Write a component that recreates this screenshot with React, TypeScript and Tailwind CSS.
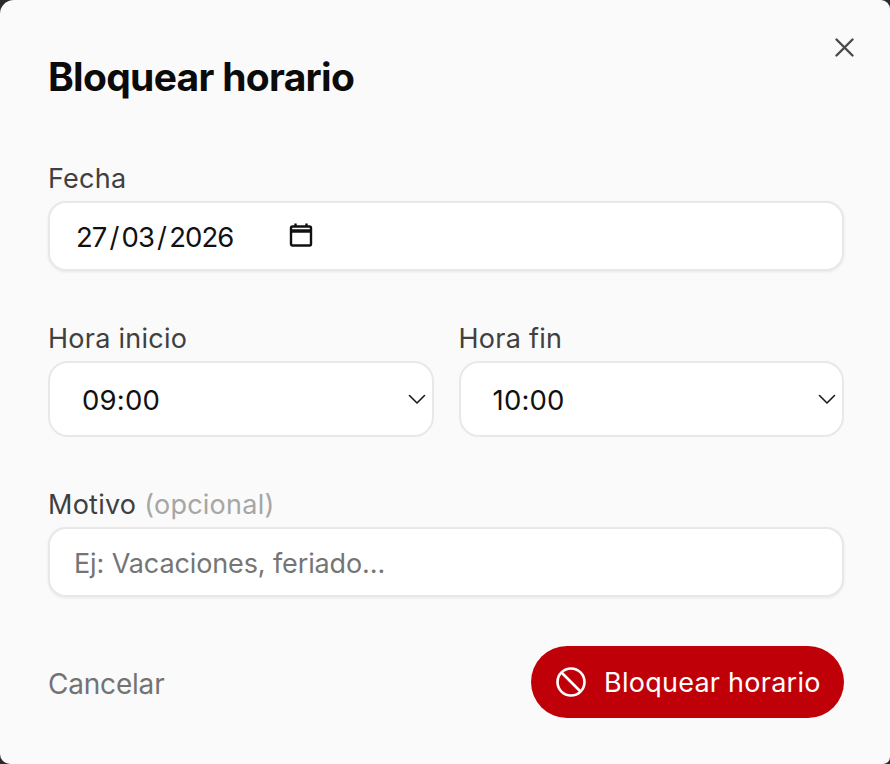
import React from "react";

const font = { fontFamily: "Inter, sans-serif" };
const labelCls = "text-[27px] leading-[34px] tracking-[0.25px] font-[420] text-[#404040] mb-[5px]";

function Chevron() {
  return (
    <svg width="18" height="18" viewBox="0 0 18 18" fill="none" stroke="#1a1a1a" strokeWidth="1.600" strokeLinecap="round" strokeLinejoin="round" className="block">
      <path d="M1.500 5.500L9 13l7.500-7.500" />
    </svg>
  );
}

function TimeSelect({ label, value }: { label: string; value: string }) {
  return (
    <div className="flex flex-col">
      <label className={labelCls}>{label}</label>
      <div className="h-[76px] rounded-[20px] bg-white border-2 border-[#e8e8e8] flex items-center justify-between pl-[32px] pr-[6px]">
        <span className="pt-[3px] text-[27.5px] tracking-[0.2px] text-[#111111]">{value}</span>
        <Chevron />
      </div>
    </div>
  );
}

export default function App() {
  return (
    <div className="w-[890px] h-[764px] bg-[#2a2a2a] overflow-hidden" style={font}>
      <div className="relative w-[890px] h-[764px] bg-[#fafafa] rounded-tl-[14px] rounded-tr-[9px] rounded-bl-[10px] rounded-br-[7px] pl-[48px] pr-[46px] pt-[54px]">
        <button className="absolute top-[38px] right-[36px] text-[#4a4a4a]">
          <svg width="19" height="19" viewBox="0 0 19 19" fill="none" stroke="currentColor" strokeWidth="2.400" strokeLinecap="round" className="block">
            <path d="M1.500 1.500l16 16M17.500 1.500l-16 16" />
          </svg>
        </button>
        <h2 className="text-[39px] leading-[46px] font-bold tracking-[-0.7px] text-[#0b0b0b]">Bloquear horario</h2>

        <div className="mt-[62px]">
          <label className={`block ${labelCls}`}>Fecha</label>
          <div className="h-[70px] rounded-[18px] bg-white border-2 border-[#e8e8e8] shadow-[0_1px_3px_rgba(0,0,0,0.08)] flex items-center pl-[26px]">
            <span className="pt-[3px] text-[27.5px] tracking-[-0.9px] text-[#111111] flex">
              <span>27</span>
              <span className="mx-[3px]">/</span>
              <span>03</span>
              <span className="mx-[3px]">/</span>
              <span>2026</span>
            </span>
            <svg width="24" height="26" viewBox="0 0 24 26" fill="none" className="ml-[56px] mb-[2px]">
              <rect x="2" y="4.500" width="20" height="19" rx="1.500" stroke="#111" strokeWidth="2.400" />
              <path d="M2 9h20" stroke="#111" strokeWidth="3.500" />
              <path d="M6.500 1.500v3M17.500 1.500v3" stroke="#111" strokeWidth="2.400" />
            </svg>
          </div>
        </div>

        <div className="grid grid-cols-2 gap-[25px] mt-[51px]">
          <TimeSelect label="Hora inicio" value="09:00" />
          <TimeSelect label="Hora fin" value="10:00" />
        </div>

        <div className="mt-[51px]">
          <label className={`block ${labelCls}`}>
            Motivo <span className="font-normal text-[#a6a6a6]">(opcional)</span>
          </label>
          <input
            placeholder="Ej: Vacaciones, feriado..."
            className="w-full h-[70px] rounded-[18px] bg-white border-2 border-[#e8e8e8] shadow-[0_1px_3px_rgba(0,0,0,0.08)] px-[24px] pt-[2px] text-[27px] tracking-[-0.12px] placeholder:text-[#757575] outline-none"
          />
        </div>

        <div className="flex items-center justify-between mt-[49px]">
          <button className="pt-[3px] text-[28px] tracking-[-0.2px] text-[#737373]">Cancelar</button>
          <button className="h-[72px] w-[313px] rounded-full bg-[#c00008] text-white flex items-center pl-[25px] gap-[18px] text-[27px] font-normal tracking-[0.25px]">
            <svg width="30" height="30" viewBox="0 0 30 30" fill="none" stroke="#fff" strokeWidth="2.600">
              <circle cx="15" cy="15" r="13.500" />
              <path d="M5.500 5.500l19 19" />
            </svg>
            <span className="pt-[3px]">Bloquear horario</span>
          </button>
        </div>
      </div>
    </div>
  );
}
